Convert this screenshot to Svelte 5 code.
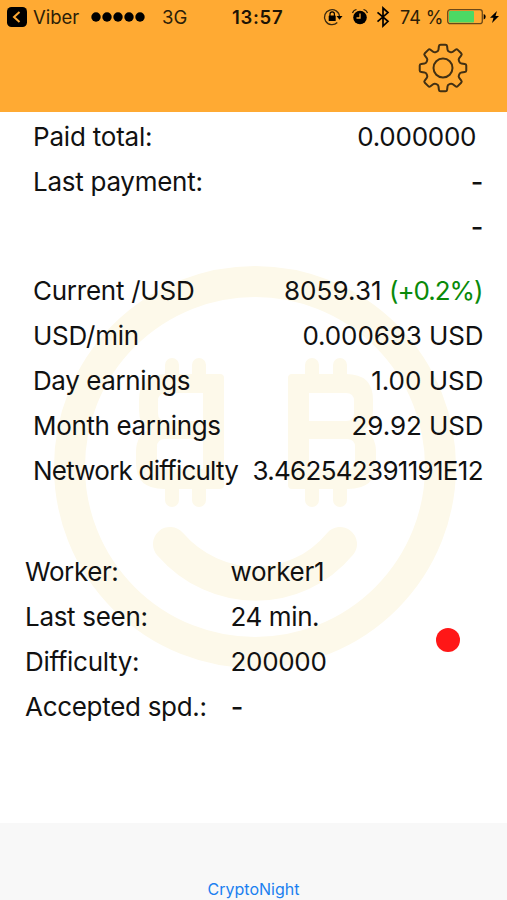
<script>
  // Each text carries its own tracking in px
  const payments = [
    [['Paid total:', -0.2], ['0.000000', -0.25]],
    [['Last payment:', -0.27], ['-', 0]],
    [['', 0], ['-', 0]]
  ];
  const earnings = [
    [['Current /USD', -0.25], ['8059.31', 0.1], ['(+0.2%)', -1.05]],
    [['USD/min', -0.25], ['0.000693 USD', -0.1]],
    [['Day earnings', -0.4], ['1.00 USD', 0]],
    [['Month earnings', -0.35], ['29.92 USD', -0.1]],
    [['Network difficulty', -0.78], ['3.462542391191E12', -0.7]]
  ];
  const worker = [
    [['Worker:', -0.4], ['worker1', -0.3]],
    [['Last seen:', -0.3], ['24 min.', -0.4]],
    [['Difficulty:', -0.3], ['200000', -0.3]],
    [['Accepted spd.:', -0.3], ['-', 0]]
  ];

  // Gear outline: eight teeth around the hub, every corner rounded off
  const points = Array.from({ length: 8 }, (_, i) =>
    [[17.6, -15.5], [23.6, -9.5], [23.6, 9.5], [17.6, 15.5]].map(([r, a]) => {
      const t = ((i * 45 + a) * Math.PI) / 180;
      return [25 + r * Math.cos(t), 25 + r * Math.sin(t)];
    })
  ).flat();
  const toward = (p, q, d) => {
    const k = d / Math.hypot(q[0] - p[0], q[1] - p[1]);
    return [p[0] + (q[0] - p[0]) * k, p[1] + (q[1] - p[1]) * k];
  };
  const gear = points.map((p, i) => {
    const a = toward(p, points[(i + 31) % 32], 1.5);
    const b = toward(p, points[(i + 1) % 32], 1.5);
    return `${i ? 'L' : 'M'}${a}Q${p} ${b}`;
  }).join('') + 'Z';
</script>

{#snippet label([text, tracking])}{#if text === '-'}<b class="dash">-</b>{:else}<span style:letter-spacing="{tracking}px" style:margin-right="{-tracking}px">{text}</span>{/if}{/snippet}

<div class="screen">
  <header>
    <div class="status">
      <svg class="back" width="20" height="20" viewBox="0 0 20 20"><rect width="20" height="20" rx="4.5" /><path d="M12.500 5L7 10l5.500 5" fill="none" stroke="#ffaa33" stroke-width="2" /></svg>
      <span class="app">Viber</span>
      <svg class="dots" width="54" height="10" viewBox="0 0 54 10">{#each [0, 1, 2, 3, 4] as i}<circle cx={5 + i * 11} cy="5" r="4.700" />{/each}</svg>
      <span class="net">3G</span>
      <span class="time">13:57</span>
      <svg class="icons" width="70" height="22" viewBox="0 0 70 22">
        <path d="M14.300 16.500a7.500 7.500 0 1 1 2.200-6" fill="none" stroke="#3b2a10" stroke-width="1.300" />
        <path d="M13.500 10h6l-3 3.800z" />
        <rect x="5.700" y="9.500" width="7" height="5.500" rx=".6" /><path d="M7 10V8a2.200 2.200 0 0 1 4.400 0v2" fill="none" stroke="#000" stroke-width="1.200" />
        <circle cx="37" cy="11.500" r="6.800" /><path d="M37 7.500v4.500h-3.500" fill="none" stroke="#ffaa33" stroke-width="1.300" />
        <path d="M29.500 7q1-3 4-3.500M44.500 7q-1-3-4-3.500" fill="none" stroke="#2b1d08" stroke-width="1.200" />
        <path d="M54.500 6.300l10.500 9-5 4.700V2l5 4.600-10.500 9" fill="none" stroke="#000" stroke-width="1.700" />
      </svg>
      <span class="pct">74 %</span>
      <svg class="battery" width="54" height="18" viewBox="0 0 54 18">
        <rect x=".7" y="1.700" width="34.600" height="14" rx="2.500" fill="none" stroke="#6b4818" stroke-width="1.300" />
        <rect x="2" y="3" width="25" height="11.500" rx="1" fill="#4cd964" /><path d="M36.700 6v5.500q2-.6 2-2.750t-2-2.750z" />
        <path d="M50 3l-7 6.800h3.500L45 15l7-7h-3.500z" />
      </svg>
    </div>
    <svg class="gear" width="50" height="50" viewBox="0 0 50 50" fill="none" stroke="#423013" stroke-width="2"><path d={gear} /><circle cx="25" cy="25" r="9.500" /></svg>
  </header>

  <main>
    <svg class="mark" width="402" height="402" viewBox="54 266 402 402">
      <g fill="none" stroke="#fdf9ea" stroke-linecap="round">
        <circle cx="255" cy="467" r="185.500" stroke-width="31" />
        <path d="M170 544C216 597 296 597 340 544" stroke-width="34" />
        <path d="M172 381v-16M199 381v-16M172 484v16M199 484v16M312 381v-16M340 381v-16M312 484v16M340 484v16" stroke-width="14" />
      </g>
      <g fill="#fdf9ea" fill-rule="evenodd">
        <path d="M292 374h54q27 0 27 26v10q0 14-9 20 12 6 12 22v11q0 26-28 26h-56q-4 0-4-4V378q0-4 4-4zM309 393v28h37q8 0 8-8v-12q0-8-8-8zM309 439v30h38q8 0 8-8v-14q0-8-8-8z" />
        <path d="M220 374h-54q-27 0-27 26v10q0 14 9 20-12 6-12 22v11q0 26 28 26h56q4 0 4-4V378q0-4-4-4zM203 393v28h-37q-8 0-8-8v-12q0-8 8-8zM203 439v30h-38q-8 0-8-8v-14q0-8 8-8z" />
      </g>
    </svg>
    <section class="payments">
      {#each payments as [name, value], i}<div class="row" class:total={i === 0}><div>{@render label(name)}</div><div>{@render label(value)}</div></div>{/each}
    </section>
    <section class="earnings">
      {#each earnings as [name, value, change]}<div class="row"><div>{@render label(name)}</div><div>{@render label(value)}{#if change}{' '}<em>{@render label(change)}</em>{/if}</div></div>{/each}
    </section>
    <section class="worker">
      {#each worker as [name, value]}<div class="row"><div class="name">{@render label(name)}</div><div>{@render label(value)}</div></div>{/each}
      <i class="state"></i>
    </section>
  </main>
  <footer><span>CryptoNight</span></footer>
</div>

<style>
  .screen { width: 507px; height: 900px; display: flex; flex-direction: column; overflow: hidden; background: #fff; color: #111; font-family: Inter, "Liberation Sans", sans-serif; }
  header { height: 111.500px; flex: none; background: #ffaa33; display: flex; flex-direction: column; }
  .status { display: flex; align-items: center; height: 34px; padding-left: 7px; font-size: 18.500px; white-space: nowrap; color: #2b1d08; }
  .status svg, .status span { flex: none; }
  .app { width: 52px; margin-left: 6px; }
  .dots { margin-left: 6px; }
  .net { width: 30px; margin-left: 17px; }
  .time { width: 53px; margin-left: 40px; font-weight: 600; letter-spacing: 0.700px; color: #1d1305; }
  .icons { margin-left: 38px; }
  .pct { width: 44px; margin-left: 7px; font-size: 18px; }
  .battery { margin-left: 3px; }
  .gear { align-self: flex-end; margin: 9px 39px 0 0; }
  main { position: relative; height: 711.500px; flex: none; padding-top: 2.200px; box-sizing: border-box; }
  .mark { position: absolute; left: 54px; top: 154.500px; }
  section { position: relative; }
  .row { height: 45.100px; display: flex; align-items: center; justify-content: space-between; font-size: 26px; white-space: nowrap; }
  .payments, .earnings { padding: 0 23.500px 0 33px; }
  .total { padding-right: 7px; }
  .earnings { margin-top: 19.100px; }
  .worker { margin-top: 55.200px; padding-left: 25px; }
  .worker .row { justify-content: flex-start; }
  .name { width: 205.500px; flex: none; }
  .dash { display: inline-block; font-weight: 500; transform: scaleX(1.050); }
  em { font-style: normal; color: #0a8a0a; }
  .state { position: absolute; left: 436px; top: 79.500px; width: 24px; height: 24px; border-radius: 50%; background: #ff1717; }
  footer { flex: 1; background: #f8f8f8; display: flex; justify-content: center; align-items: flex-end; color: #1b80f0; font-size: 16px; line-height: 22px; }
</style>
